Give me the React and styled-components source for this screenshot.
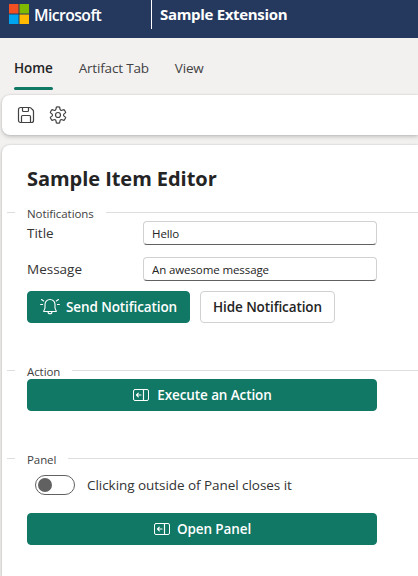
import React, { useState } from 'react';
import styled, { createGlobalStyle } from 'styled-components';

const GlobalStyle = createGlobalStyle`
  *, *::before, *::after { box-sizing: border-box; }
  html, body { margin: 0; height: 100%; overflow: hidden; background: #f2f1f0; }
  body, button, input {
    font-family: 'Open Sans', 'Noto Sans', sans-serif;
    font-size: 13.5px;
    color: #242424;
  }
`;

const Page = styled.div`
  display: flex;
  flex-direction: column;
  height: 100vh;
  overflow: hidden;
`;

const Header = styled.header`
  display: flex;
  flex: none;
  height: 38px;
  padding-left: 9px;
  background: #25395f;
  color: #fff;
`;

const Brand = styled.div`
  display: flex;
  align-items: center;
  gap: 5px;
  width: 142px;
  height: 28px;
`;

const BrandName = styled.span`
  height: 28px;
  font-size: 15.8px;
  font-weight: 600;
  letter-spacing: -0.6px;
  line-height: 30px;
`;

const ProductName = styled.div`
  height: 29px;
  padding-left: 8px;
  border-left: 1px solid #fff;
  font-size: 15px;
  font-weight: 700;
  letter-spacing: -0.32px;
  line-height: 28px;
`;

const Tabs = styled.nav`
  display: flex;
  flex: none;
  gap: 26px;
  height: 57px;
  padding: 12px 14px 0;
`;

const Tab = styled.button`
  display: flex;
  flex-direction: column;
  justify-content: space-between;
  height: 40px;
  padding: 0;
  border: 0;
  background: none;
  color: ${(p) => (p.$active ? '#242424' : '#424242')};
  font-weight: ${(p) => (p.$active ? 600 : 400)};
  letter-spacing: ${(p) => (p.$active ? '-0.1px' : '-0.18px')};
  line-height: 36px;

  &::after {
    content: '';
    width: 100%;
    height: 3px;
    border-radius: 2px;
    background: ${(p) => (p.$active ? '#117865' : 'transparent')};
  }
`;

const TabLabel = styled.span`
  height: 36px;
`;

const Surface = styled.div`
  margin-left: 2px;
  background: #fff;
  box-shadow: 0 0 2px rgba(0, 0, 0, 0.16), 0 2px 4px rgba(0, 0, 0, 0.18);
`;

const Toolbar = styled(Surface)`
  display: flex;
  flex: none;
  align-items: center;
  gap: 12px;
  height: 40px;
  padding-left: 14px;
  border-radius: 8px 0 0 8px;
`;

const ToolButton = styled.button`
  display: grid;
  place-items: center;
  width: 20px;
  height: 20px;
  padding: 0;
  border: 0;
  background: none;
  color: #424242;
`;

const Editor = styled(Surface)`
  flex: 1;
  margin-top: 10px;
  padding: 19px 0 0 5px;
  border-radius: 8px 0 0 0;
`;

const Title = styled.h1`
  height: 30px;
  margin: 0 0 12px 20px;
  font-size: 20px;
  font-weight: 700;
  letter-spacing: -0.05px;
  line-height: 29px;
`;

const Section = styled.section`
  height: ${(p) => p.$height}px;
`;

const Divider = styled.div`
  display: flex;
  align-items: center;
  gap: 12px;
  height: 13px;
  color: #424242;
  font-size: 11.5px;

  &::before,
  &::after {
    content: '';
    height: 1px;
    background: #dedede;
  }
  &::before { width: 8px; }
  &::after { flex: 1; }
`;

const DividerLabel = styled.span`
  height: 13px;
  line-height: 16px;
  letter-spacing: -0.08px;
`;

const SectionBody = styled.div`
  width: 350px;
  margin-left: 20px;
  padding-top: 2px;
`;

const Field = styled.label`
  display: flex;
  align-items: center;
  height: 24px;
  margin-bottom: ${(p) => p.$gap}px;
`;

const FieldLabel = styled.span`
  width: 116px;
  color: #333;
`;

const Input = styled.input`
  width: 234px;
  height: 24px;
  padding: 0 8px;
  border: 1px solid #d1d1d1;
  border-bottom-color: #616161;
  border-radius: 4px;
  outline: none;
  background: #fff;
  font-size: 11.5px;
  letter-spacing: -0.1px;
`;

const ButtonRow = styled.div`
  display: flex;
  gap: 10px;
`;

const Button = styled.button`
  display: flex;
  align-items: center;
  justify-content: center;
  gap: ${(p) => p.$gap || 0}px;
  width: ${(p) => p.$width}px;
  height: 32px;
  padding: 0;
  border: 1px solid ${(p) => (p.$primary ? '#117865' : '#d1d1d1')};
  border-radius: 4px;
  background: ${(p) => (p.$primary ? '#117865' : '#fff')};
  color: ${(p) => (p.$primary ? '#fff' : '#242424')};
  font-weight: 600;
  letter-spacing: -0.1px;
  white-space: nowrap;
`;

const SwitchRow = styled.div`
  display: flex;
  align-items: center;
  gap: 12px;
  height: 20px;
  margin: 8px 0 18px 8px;
  color: #333;
  letter-spacing: -0.05px;
`;

const Switch = styled.button`
  display: flex;
  align-items: center;
  justify-content: ${(p) => (p.$on ? 'flex-end' : 'flex-start')};
  width: 40px;
  height: 20px;
  padding: 0 2px;
  border: 1px solid #616161;
  border-radius: 10px;
  background: #fff;
`;

const Thumb = styled.span`
  width: 14px;
  height: 14px;
  border-radius: 50%;
  background: #616161;
`;

const MicrosoftLogo = () => (
  <svg width="20" height="20" viewBox="0 0 20 20">
    <path fill="#f25022" d="M0 0h9.5v9.5H0z" />
    <path fill="#7fba00" d="M10.5 0H20v9.5h-9.5z" />
    <path fill="#00a4ef" d="M0 10.5h9.5V20H0z" />
    <path fill="#ffb900" d="M10.5 10.5H20V20h-9.5z" />
  </svg>
);

const SaveIcon = () => (
  <svg width="20" height="20" viewBox="0 0 20 20" fill="none" stroke="currentColor" strokeWidth="1.2">
    <path d="M4.5 2.5h9.1a2 2 0 0 1 1.4.6l1.9 1.9a2 2 0 0 1 .6 1.4v9.1a2 2 0 0 1-2 2h-11a2 2 0 0 1-2-2v-11a2 2 0 0 1 2-2z" />
    <path d="M6.5 2.5v3a1 1 0 0 0 1 1h4a1 1 0 0 0 1-1v-3M5.5 17.5v-6a1 1 0 0 1 1-1h7a1 1 0 0 1 1 1v6" />
  </svg>
);

const SettingsIcon = () => (
  <svg width="20" height="20" viewBox="0 0 20 20" fill="none" stroke="currentColor" strokeWidth="1.2">
    <path d="M2.3 7.6A8.1 8.1 0 0 1 4 4.6l2 .7a1.5 1.5 0 0 0 1.97-1.14l.38-2.05a8 8 0 0 1 3.3 0l.38 2.05A1.5 1.5 0 0 0 14 5.3l2-.7a8.1 8.1 0 0 1 1.7 3l-1.6 1.26a1.5 1.5 0 0 0 0 2.28l1.6 1.26a8.1 8.1 0 0 1-1.7 3l-2-.7a1.5 1.5 0 0 0-1.97 1.14l-.38 2.05a8 8 0 0 1-3.3 0l-.38-2.05A1.5 1.5 0 0 0 6 14.7l-2 .7a8.1 8.1 0 0 1-1.7-3l1.6-1.26a1.5 1.5 0 0 0 0-2.28z" strokeLinejoin="round" />
    <circle cx="10" cy="10" r="2.5" />
  </svg>
);

const BellIcon = () => (
  <svg width="20" height="20" viewBox="0 0 20 20" fill="none" stroke="currentColor" strokeWidth="1.1" strokeLinecap="round" strokeLinejoin="round">
    <path d="M10 2.5a5 5 0 0 0-5 5v3.6l-1.3 3a.3.3 0 0 0 .3.4h12a.3.3 0 0 0 .3-.4l-1.3-3V7.5a5 5 0 0 0-5-5zM8 14.8a2 2 0 0 0 4 0" />
    <path d="M1.5 2.5l2.2 1.5M18.5 2.5l-2.2 1.5M.6 7.5h2M17.4 7.5h2" />
  </svg>
);

const PanelIcon = () => (
  <svg width="18" height="14" viewBox="0 0 18 14" fill="none" stroke="currentColor" strokeLinecap="round" strokeLinejoin="round">
    <rect x="1.5" y="1.5" width="15" height="11" rx="1.5" />
    <path d="M11.5 1.5v11M9 7H4.500M6.300 5.200L4.500 7l1.800 1.800" strokeWidth="1.15" />
  </svg>
);

export default function App() {
  const [title, setTitle] = useState('Hello');
  const [message, setMessage] = useState('An awesome message');
  const [closesOutside, setClosesOutside] = useState(false);
  return (
    <Page>
      <GlobalStyle />
      <Header>
        <Brand>
          <MicrosoftLogo />
          <BrandName>Microsoft</BrandName>
        </Brand>
        <ProductName>Sample Extension</ProductName>
      </Header>
      <Tabs>
        <Tab $active><TabLabel>Home</TabLabel></Tab>
        <Tab><TabLabel>Artifact Tab</TabLabel></Tab>
        <Tab><TabLabel>View</TabLabel></Tab>
      </Tabs>
      <Toolbar>
        <ToolButton aria-label="Save"><SaveIcon /></ToolButton>
        <ToolButton aria-label="Settings"><SettingsIcon /></ToolButton>
      </Toolbar>
      <Editor>
        <Title>Sample Item Editor</Title>
        <Section $height={158}>
          <Divider><DividerLabel>Notifications</DividerLabel></Divider>
          <SectionBody>
            <Field $gap={12}>
              <FieldLabel>Title</FieldLabel>
              <Input value={title} onChange={(e) => setTitle(e.target.value)} />
            </Field>
            <Field $gap={10}>
              <FieldLabel>Message</FieldLabel>
              <Input value={message} onChange={(e) => setMessage(e.target.value)} />
            </Field>
            <ButtonRow>
              <Button $primary $width={163} $gap={6}><BellIcon />Send Notification</Button>
              <Button $width={135}>Hide Notification</Button>
            </ButtonRow>
          </SectionBody>
        </Section>
        <Section $height={88}>
          <Divider><DividerLabel>Action</DividerLabel></Divider>
          <SectionBody>
            <Button $primary $width={350} $gap={7}><PanelIcon />Execute an Action</Button>
          </SectionBody>
        </Section>
        <Section $height={110}>
          <Divider><DividerLabel>Panel</DividerLabel></Divider>
          <SectionBody>
            <SwitchRow>
              <Switch
                role="switch"
                aria-checked={closesOutside}
                $on={closesOutside}
                onClick={() => setClosesOutside(!closesOutside)}
              >
                <Thumb />
              </Switch>
              Clicking outside of Panel closes it
            </SwitchRow>
            <Button $primary $width={350} $gap={6}><PanelIcon />Open Panel</Button>
          </SectionBody>
        </Section>
      </Editor>
    </Page>
  );
}
